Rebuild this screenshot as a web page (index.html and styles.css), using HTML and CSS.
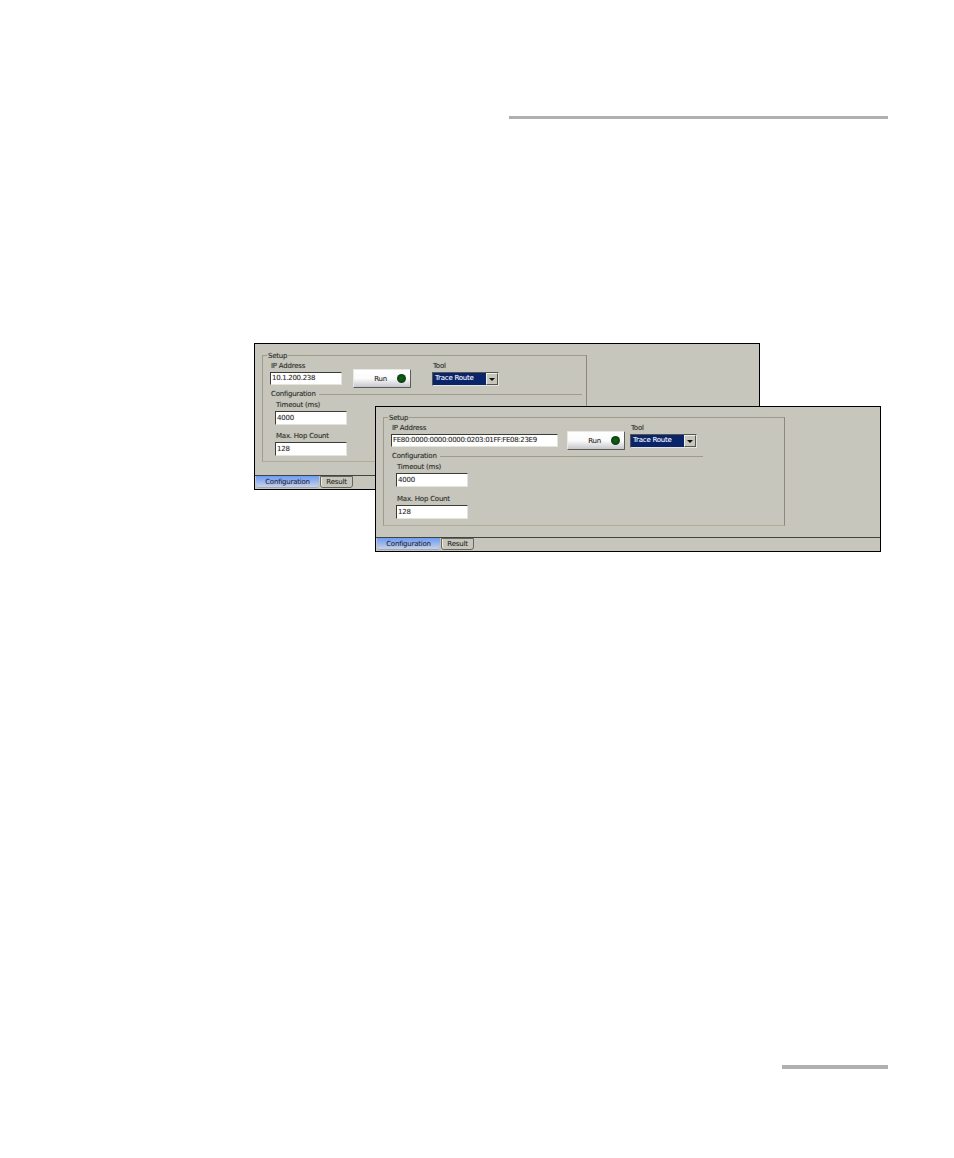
FILE: index.html
```html
<!DOCTYPE html>
<html lang="en">
<head>
<meta charset="utf-8">
<title>Trace Route</title>
<link rel="stylesheet" href="styles.css">
</head>
<body>
<div class="page">
  <div class="rule rule-top"></div>

  <section class="window window-back">
    <div class="window-body">
      <div class="group">
        <span class="legend">Setup</span>
        <div class="top-row">
          <div class="field"><label class="label">IP Address</label><div class="input input-short">10.1.200.238</div></div>
          <button class="run">Run <span class="led"></span></button>
          <div class="field tool"><label class="label">Tool</label>
            <div class="select"><span class="select-value">Trace Route</span><span class="select-arrow"></span></div>
          </div>
        </div>
        <div class="config-head"><span>Configuration</span><i class="config-line"></i></div>
        <div class="config-fields">
          <div class="field"><label class="label">Timeout (ms)</label><div class="input input-num">4000</div></div>
          <div class="field"><label class="label">Max. Hop Count</label><div class="input input-num">128</div></div>
        </div>
      </div>
    </div>
    <div class="tabs">
      <span class="tab tab-active">Configuration</span>
      <span class="tab">Result</span>
    </div>
  </section>

  <section class="window window-front">
    <div class="window-body">
      <div class="group">
        <span class="legend">Setup</span>
        <div class="top-row">
          <div class="field"><label class="label">IP Address</label><div class="input input-long">FE80:0000:0000:0000:0203:01FF:FE08:23E9</div></div>
          <button class="run">Run <span class="led"></span></button>
          <div class="field tool"><label class="label">Tool</label>
            <div class="select"><span class="select-value">Trace Route</span><span class="select-arrow"></span></div>
          </div>
        </div>
        <div class="config-head"><span>Configuration</span><i class="config-line"></i></div>
        <div class="config-fields">
          <div class="field"><label class="label">Timeout (ms)</label><div class="input input-num">4000</div></div>
          <div class="field"><label class="label">Max. Hop Count</label><div class="input input-num">128</div></div>
        </div>
      </div>
    </div>
    <div class="tabs">
      <span class="tab tab-active">Configuration</span>
      <span class="tab">Result</span>
    </div>
  </section>

  <div class="rule rule-bottom"></div>
</div>
</body>
</html>
```
FILE: styles.css
```css
* { box-sizing: border-box; }
html, body { margin: 0; padding: 0; background: #fff; }
.page {
  position: relative;
  width: 954px;
  height: 1158px;
  font-family: "DejaVu Sans", sans-serif;
  font-size: 7px;
  letter-spacing: -0.22px;
  color: #2a2a26;
  overflow: hidden;
}
.rule { background: #b0b0b0; position: absolute; }
.rule-top { left: 509px; top: 116px; width: 379px; height: 3px; }
.rule-bottom { left: 782px; top: 1065px; width: 106px; height: 4px; }

.window {
  position: absolute;
  width: 506px;
  border: 1px solid #000;
  background: #c6c6bc;
  display: flex;
  flex-direction: column;
  text-shadow: 0 0 1px rgba(60, 60, 56, 0.3);
}
.window-back { left: 254px; top: 343px; height: 147px; }
.window-front { left: 375px; top: 406px; height: 146px; }

.window-body { flex: 1; padding-left: 7px; }
.window-back .window-body { padding-top: 11px; }
.window-front .window-body { padding-top: 10px; }

.group {
  position: relative;
  border: 1px solid #a09a8c;
  border-right-color: #8f8778;
  border-bottom-color: #b0ac9a;
  padding: 5px 0 0 7px;
}
.window-back .group { width: 325px; height: 107px; }
.window-front .group { width: 402px; height: 109px; }

.legend {
  position: absolute;
  left: 4px;
  top: -5px;
  height: 10px;
  line-height: 10px;
  padding: 0 1px;
  background: #c6c6bc;
}
.top-row { display: flex; align-items: flex-start; }
.field { display: flex; flex-direction: column; }
.label { height: 11px; line-height: 10px; padding-left: 1px; }

.input {
  background: #fff;
  border: 1px solid #8a8a80;
  border-top-color: #3c3c37;
  border-left-color: #3c3c37;
  border-right-color: #e4e4dc;
  border-bottom-color: #e4e4dc;
  height: 13px;
  line-height: 11px;
  padding-left: 1px;
  white-space: nowrap;
  overflow: hidden;
}
.input-short { width: 72px; letter-spacing: -0.3px; }
.input-long { width: 167px; letter-spacing: -0.33px; }
.input-num { width: 72px; height: 14px; line-height: 12px; }

.run {
  width: 58px;
  height: 19px;
  margin-top: 8px;
  padding: 0 4px 0 0;
  border: 1px solid #5c5c55;
  border-top-color: #e8e8e2;
  border-left-color: #e8e8e2;
  border-radius: 1px;
  background: linear-gradient(#ffffff 0%, #fbfbfb 50%, #c6c6ce 100%);
  font: inherit;
  letter-spacing: inherit;
  color: inherit;
  text-shadow: inherit;
  display: flex;
  align-items: center;
  justify-content: flex-end;
  gap: 10px;
}
.led {
  width: 9px;
  height: 9px;
  border-radius: 50%;
  background: radial-gradient(circle at 50% 48%, #0b6a14 0%, #0a4f10 45%, #123a14 65%, #6f7a6c 100%);
}
.window-back .run { margin-left: 11px; }
.window-front .run { margin-left: 9px; }
.window-back .tool { margin-left: 21px; }
.window-front .tool { margin-left: 5px; }

.select {
  display: flex;
  width: 67px;
  height: 14px;
  border: 1px solid #e4e4dc;
  border-top-color: #55554e;
  border-left-color: #55554e;
}
.select-value {
  flex: 1;
  background: #0a246a;
  color: #fff;
  line-height: 11px;
  padding-left: 2px;
  text-shadow: 0 0 1px rgba(230, 230, 255, 0.3);
}
.select-arrow {
  width: 12px;
  background: #c6c6bc;
  border: 1px solid #f0f0ea;
  border-right-color: #55554e;
  border-bottom-color: #55554e;
  position: relative;
}
.select-arrow::after {
  content: "";
  position: absolute;
  left: 2px;
  top: 4px;
  border: 3px solid transparent;
  border-top: 3px solid #111;
  border-bottom: 0;
}

.config-head {
  display: flex;
  align-items: center;
  gap: 3px;
  width: 311px;
  height: 10px;
  margin: 1px 0 0 1px;
}
.config-head span { line-height: 10px; white-space: nowrap; }
.config-line { flex: 1; height: 1px; background: #a09a8c; }

.config-fields { display: flex; flex-direction: column; margin-left: 5px; margin-top: 1px; }
.window-back .config-fields { gap: 6px; }
.window-front .config-fields { gap: 7px; }

.tabs {
  display: flex;
  align-items: flex-start;
  height: 14px;
  flex: none;
  border-top: 1px solid #44443f;
  padding-left: 1px;
  gap: 1px;
}
.tab {
  height: 12px;
  line-height: 10px;
  text-align: center;
  width: 33px;
  border: 1px solid #66665e;
  border-radius: 0 0 3px 3px;
  background: #c6c6bc;
  box-shadow: inset 1px 0 0 #ecece6;
}
.tab-active {
  width: 63px;
  line-height: 12px;
  border: 0;
  border-bottom: 1px solid #9aa6c4;
  background: linear-gradient(#6f9cf3 0%, #93b2ee 45%, #c9d2e2 100%);
  box-shadow: none;
  color: #1c2a4a;
}
```
